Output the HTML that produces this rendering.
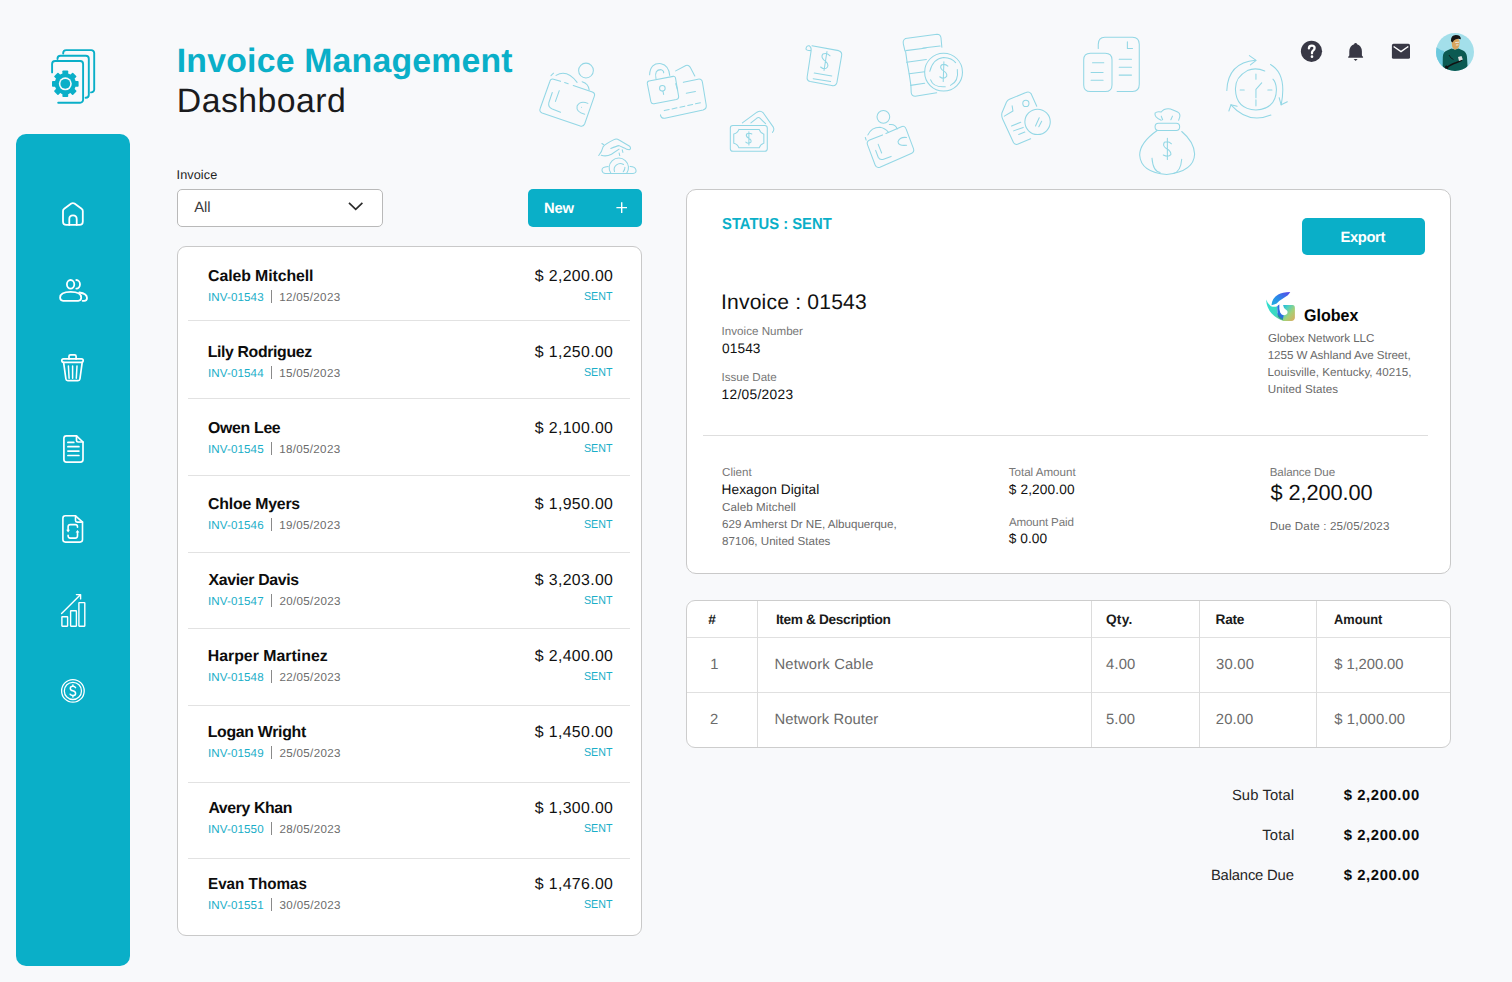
<!DOCTYPE html>
<html><head><meta charset="utf-8">
<style>
html,body{margin:0;padding:0;}
body{text-rendering:geometricPrecision;width:1512px;height:982px;position:relative;overflow:hidden;background:#f8f9fb;font-family:"Liberation Sans",sans-serif;}
.a{position:absolute;}
.t{position:absolute;white-space:nowrap;}
.sb{left:16px;top:134px;width:114px;height:832px;background:#0aafc8;border-radius:10px;}
.card{background:#fff;border:1px solid #c9c9c9;box-sizing:border-box;}
.hl{position:absolute;height:1px;background:#e0e0e0;}
.vl{position:absolute;width:1px;background:#dcdcdc;}
svg{position:absolute;overflow:visible;}
</style></head><body>
<!-- decorative background icons -->
<svg style="left:0;top:0" width="1512" height="200" viewBox="0 0 1512 200"><g fill="none" stroke="#93d7e5" stroke-width="1.05" stroke-linecap="round" stroke-linejoin="round"><path d="M 553.54,79.18 L 560.54,81.34 M 564.61,82.62 L 568.18,83.76 M 573.27,85.54 L 592.36,91.91 Q 595.54,93.18 594.27,96.36 L 584.72,123.72 Q 583.45,126.90 580.27,126.01 L 542.09,112.90 Q 538.91,111.63 540.18,108.45 L 549.73,81.72 Q 550.62,78.54 553.54,79.18" />
<path d="M 556.09,75.36 Q 566.91,69.00 577.09,82.36" />
<path d="M 551.00,75.62 L 553.54,73.20" />
<path d="M 582.18,81.72 Q 588.54,83.63 589.18,90.00" />
<path d="M 559.27,90.63 L 555.45,101.45 M 552.27,92.54 L 548.83,102.72 Q 547.82,107.18 552.27,109.09 L 560.54,112.27" />
<path d="M 587.90,103.36 Q 580.27,100.18 577.09,105.90 Q 575.81,112.27 584.72,114.18" />
<circle cx="581.54" cy="107.18" r="0.51" fill="#96d9e6" stroke="none"/>
<circle cx="585.99" cy="70.53" r="7.38" />
<path d="M 648.99,81.09 L 673.17,76.38 Q 675.08,76.00 675.46,77.91 L 678.64,96.36 Q 678.89,98.90 676.35,99.54 L 654.08,103.74 Q 651.53,104.25 650.90,101.70 L 647.33,83.63 Q 647.08,81.47 648.99,81.09" />
<path d="M 649.62,74.73 Q 650.26,62.64 661.08,63.65 Q 668.71,65.18 669.73,75.36" />
<path d="M 655.99,78.54 Q 654.08,69.63 661.08,69.63 Q 664.26,70.91 663.62,72.82" />
<circle cx="662.35" cy="88.34" r="2.80" />
<path d="M 662.99,91.27 L 663.62,94.45" />
<path d="M 683.35,82.36 L 697.98,79.18 Q 701.80,78.54 702.44,82.36 L 706.25,105.27 Q 706.64,109.09 703.07,109.98 L 664.89,118.25 Q 661.08,118.63 660.44,114.81" />
<path d="M 675.71,83.63 L 677.62,90.00" />
<path d="M 664.26,110.61 L 700.53,102.72" stroke-dasharray="5 3"/>
<path d="M 686.27,93.18 L 695.44,91.52" />
<path d="M 675.71,70.91 L 685.89,65.44 Q 688.44,64.54 690.09,67.09 L 694.80,76.00" />
<path d="M 598.72,155.53 Q 601.90,151.72 603.17,146.63 Q 605.08,144.08 613.99,139.63 Q 616.54,138.35 619.08,140.01 L 629.26,145.99 Q 631.81,148.54 629.26,149.81 Q 626.72,149.81 624.17,147.90 L 619.08,145.61 Q 616.54,145.99 610.81,148.54" />
<path d="M 601.26,155.28 Q 606.36,156.81 611.45,154.26 L 619.08,149.17" />
<path d="M 601.90,143.44 L 603.81,144.72" />
<path d="M 619.08,152.99 L 619.72,155.53 M 622.26,149.81 L 622.90,152.35" />
<path d="M611.0,173.5 A9.7,9.7 0 1 1 626.6,173.5"/>
<path d="M614.5,171.6 A6.1,6.1 0 0 1 623.5,164.5 M624.9,167.3 A6.1,6.1 0 0 1 623.2,171.8"/>
<path d="M608.1,166.4 Q601.5,166.8 602,170.5 Q602.5,173.5 605.5,173.5 L633,173.5 Q636.5,173.2 636,170 Q635.2,166.5 630.2,166.4"/>
<path d="M 812.00,45.82 L 838.66,50.64 Q 842.44,51.84 841.58,55.80 L 836.94,82.45 Q 836.08,86.41 831.78,85.55 L 810.28,81.59 Q 806.50,80.73 807.19,76.78 L 811.14,50.64 Q 811.49,47.20 809.42,45.82 Q 806.84,45.13 805.98,48.57 Q 805.64,50.64 811.14,50.64" />
<path d="M 830.06,55.80 Q 826.62,52.36 822.84,54.08 Q 820.60,56.66 824.04,60.09 Q 829.20,63.53 827.48,66.97 Q 824.90,70.41 820.60,66.97 M 826.96,51.50 L 824.04,70.41" />
<path d="M 814.24,72.99 L 831.78,75.92 M 813.21,78.67 L 830.58,81.59" />
<path d="M 732.90,125.44 L 764.71,125.44 Q 767.29,125.44 767.29,128.02 L 767.29,148.66 Q 767.29,151.24 764.71,151.24 L 732.90,151.24 Q 730.32,151.24 730.32,148.66 L 730.32,128.02 Q 730.32,125.44 732.90,125.44" />
<path d="M 738.92,129.40 L 759.21,129.40 Q 760.41,133.18 763.85,134.04 L 763.85,143.16 Q 760.41,144.02 759.21,147.80 L 738.92,147.80 Q 737.71,144.02 733.76,143.16 L 733.76,134.04 Q 737.71,133.18 738.92,129.40" />
<path d="M 751.81,134.04 Q 749.23,132.32 746.66,134.04 Q 745.45,136.28 748.37,138.00 Q 751.81,139.72 750.95,142.12 Q 748.37,144.36 745.80,142.12 M 748.89,131.81 L 748.89,144.88" />
<path d="M 742.36,122.86 L 756.97,112.20 Q 760.41,109.97 762.99,112.55 L 773.31,127.16 Q 774.69,130.09 772.45,132.32" />
<path d="M 750.95,122.86 L 756.97,118.05 Q 758.69,116.84 760.41,118.56 L 765.57,123.72" />
<path d="M 905.38,38.60 L 937.02,34.30 Q 940.46,34.30 940.98,37.74 L 941.84,47.20" />
<path d="M 905.38,38.60 Q 902.63,39.97 903.32,43.76 L 904.87,50.64 Q 905.73,52.36 905.73,52.36 L 907.10,62.16 L 909.17,73.85 L 910.89,85.37 L 911.23,92.77 Q 911.75,96.21 915.18,96.21 L 936.68,92.77" />
<path d="M 905.73,50.64 L 926.36,48.06 M 922.92,48.06 L 940.12,45.99 M 906.59,62.33 L 926.36,59.58 M 909.17,73.85 L 924.64,71.79 M 910.54,85.37 L 924.64,83.31" />
<circle cx="943.56" cy="72.13" r="18.92" />
<path d="M 957.32,69.55 Q 959.04,81.59 950.44,85.37 M 945.28,86.75 Q 933.24,87.61 930.66,79.87 M 929.80,71.27 Q 933.24,58.37 943.56,57.52 Q 952.16,57.86 955.60,62.67" />
<path d="M 947.86,66.11 Q 945.28,63.53 941.84,64.74 Q 939.26,66.97 942.18,69.90 Q 947.86,72.99 946.66,76.43 Q 943.56,79.87 939.78,76.78 M 943.90,61.81 L 943.22,81.59" />
<circle cx="883.37" cy="116.84" r="6.36" />
<path d="M 869.61,140.06 L 882.51,134.90 M 885.95,133.53 L 901.43,126.65 Q 904.87,125.44 906.07,128.88 L 913.47,148.66 Q 914.67,152.10 911.23,153.47 L 879.93,167.23 Q 876.49,168.44 875.12,165.00 L 867.55,144.88 Q 866.17,141.44 869.61,140.06" />
<path d="M 867.89,134.90 Q 871.33,127.16 879.93,127.16 Q 885.09,128.02 888.53,132.32" />
<path d="M 865.31,137.48 L 866.17,140.06" />
<path d="M 889.39,124.58 Q 895.41,123.72 897.13,128.88" />
<path d="M 878.21,144.36 L 881.65,152.96 M 875.63,150.38 L 878.21,157.26 Q 879.93,160.70 884.23,158.98 L 891.11,156.40" />
<path d="M 906.59,137.48 Q 899.71,136.62 897.99,141.78 Q 897.99,146.08 906.59,145.22" />
<path d="M 1036.75,106.28 L 1031.01,93.56 Q 1028.96,91.10 1025.88,92.54 L 1009.48,99.30 Q 1007.43,100.13 1006.40,102.18 L 1001.89,113.04 Q 1001.28,116.12 1002.71,119.19 L 1013.58,142.77 Q 1015.63,145.44 1018.71,143.80 L 1030.60,138.67" />
<path d="M 1012.14,105.87 L 1012.96,110.99 L 1004.35,116.12" />
<circle cx="1025.88" cy="103.41" r="3.08" />
<path d="M 1011.53,125.96 L 1020.76,122.27 M 1013.58,130.88 L 1023.22,127.40 M 1018.71,134.57 L 1024.86,132.11" />
<circle cx="1037.57" cy="121.86" r="12.71" />
<path d="M 1035.52,125.96 L 1039.21,117.76 M 1038.80,126.78 L 1041.67,121.24" />
<path d="M 1098.26,48.45 L 1098.26,44.35 Q 1098.26,37.18 1104.82,37.18 L 1132.51,37.18 Q 1139.27,37.18 1139.27,44.35 L 1139.27,84.34 Q 1139.27,91.51 1132.51,91.51 L 1117.13,91.51" />
<path d="M 1090.47,53.17 L 1105.23,53.17 Q 1112.00,53.17 1112.00,59.73 L 1112.00,84.95 Q 1112.00,91.51 1105.23,91.51 L 1090.47,91.51 Q 1083.71,91.51 1083.71,84.95 L 1083.71,59.73 Q 1083.71,53.17 1090.47,53.17" />
<path d="M 1127.38,41.89 L 1127.38,48.45 L 1132.51,48.45" />
<path d="M 1119.18,59.32 L 1131.48,59.32 M 1119.18,67.32 L 1131.48,67.32 M 1119.18,75.11 L 1131.48,75.11" />
<path d="M 1092.52,62.81 L 1103.80,62.81" />
<path d="M 1091.09,72.44 L 1104.82,72.44 M 1091.09,80.24 L 1104.82,80.24" stroke-dasharray="12 6"/>
<path d="M 1157.11,130.47 Q 1139.68,142.77 1139.68,155.08 Q 1140.71,172.51 1166.75,174.56 Q 1194.02,171.48 1194.63,154.05 Q 1194.02,141.75 1181.72,131.50" />
<path d="M 1158.55,123.30 L 1176.18,123.30 Q 1179.67,123.30 1179.67,126.78 Q 1179.67,130.47 1176.18,130.47 L 1158.55,130.47 Q 1155.06,130.47 1155.06,126.78 Q 1155.06,123.30 1158.55,123.30" />
<path d="M 1161.21,120.22 Q 1154.04,117.14 1155.06,113.04 Q 1157.11,110.99 1161.21,112.02 Q 1164.29,107.92 1170.44,108.94 Q 1175.56,110.99 1177.62,112.02 Q 1181.72,114.07 1178.64,120.22" />
<path d="M 1151.98,158.15 Q 1153.01,171.48 1160.19,172.51 M 1181.72,159.18 Q 1180.69,171.48 1173.51,173.53" />
<path d="M 1161.21,116.12 L 1162.65,119.81 M 1172.49,116.12 L 1170.85,119.81" />
<path d="M 1171.46,143.80 Q 1168.39,140.72 1164.29,142.36 Q 1162.24,145.85 1166.34,148.52 Q 1171.46,151.39 1170.85,154.67 Q 1168.39,157.54 1163.26,155.08 M 1167.36,138.26 L 1167.36,159.59" />
<path d="M 1226.83,90.49 Q 1227.85,62.81 1255.53,60.35" />
<path d="M 1249.38,55.63 L 1256.15,60.35 L 1250.41,64.86" />
<path d="M 1270.50,64.45 Q 1287.31,74.08 1281.16,104.84" />
<path d="M 1287.31,101.77 L 1281.16,104.84 L 1279.11,97.66" />
<path d="M 1270.91,115.09 Q 1248.36,124.32 1230.93,104.84" />
<path d="M 1228.88,110.99 L 1230.93,104.84 L 1237.08,106.28" />
<path d="M 1264.76,71.01 Q 1255.53,66.91 1247.33,70.60 Q 1235.03,77.16 1235.44,89.46 Q 1236.05,108.94 1255.94,109.97 Q 1276.04,108.94 1276.45,89.46 Q 1276.04,82.29 1272.96,79.21" />
<path d="M 1255.94,74.08 L 1255.94,79.21 M 1255.94,99.71 L 1255.94,105.87 M 1240.15,90.08 L 1244.25,90.08 M 1267.83,90.08 L 1271.94,90.08 M 1255.94,97.66 L 1255.94,89.46 L 1261.68,82.90" /></g></svg>
<!-- logo -->
<svg class="a" style="left:40px;top:40px" width="70" height="70" viewBox="0 0 70 70">
 <g fill="none" stroke="#0aafc8" stroke-width="1.9" stroke-linecap="round">
  <path d="M23.2,13.6 V13.1 a3,3 0 0 1 3,-3 H51.2 a3,3 0 0 1 3,3 V49.4 a3,3 0 0 1 -3,3 H51"/>
  <path d="M17.5,19 V18.7 a3,3 0 0 1 3,-3 H45.8 a3,3 0 0 1 3,3 V54.7 a3,3 0 0 1 -3,3 H45.6"/>
  <path d="M12.1,32.4 V24 a3,3 0 0 1 3,-3 H40.1 a3,3 0 0 1 3,3 V59.7 a3,3 0 0 1 -3,3 H18.2"/>
 </g>
 <g transform="translate(25.3,43.8)" fill="#0aafc8">
  <circle r="10.6"/>
  <rect x="-2.9" y="-13.3" width="5.8" height="26.6" rx="0.8"/>
  <rect x="-2.9" y="-13.3" width="5.8" height="26.6" rx="0.8" transform="rotate(45)"/>
  <rect x="-2.9" y="-13.3" width="5.8" height="26.6" rx="0.8" transform="rotate(90)"/>
  <rect x="-2.9" y="-13.3" width="5.8" height="26.6" rx="0.8" transform="rotate(135)"/>
  <circle r="6.5" fill="#f8f9fb"/>
  <circle r="4.9"/>
 </g>
</svg>
<!-- sidebar -->
<div class="a sb"></div>
<svg style="left:50px;top:190px" width="50" height="50" viewBox="0 0 50 50"><g fill="none" stroke="#fff" stroke-width="1.8" stroke-linejoin="round" stroke-linecap="round">
 <path d="M13,21 Q13,19.6 14.2,18.8 L21.3,13.6 Q22.9,12.5 24.5,13.6 L31.6,18.8 Q32.8,19.6 32.8,21 V31.5 Q32.8,34.9 29.4,34.9 H16.4 Q13,34.9 13,31.5 Z"/>
 <path d="M19.3,34.9 V28.9 Q19.3,25.3 23,25.3 Q26.7,25.3 26.7,28.9 V34.9"/></g></svg>
<svg style="left:50px;top:265px" width="50" height="50" viewBox="0 0 50 50"><g fill="none" stroke="#fff" stroke-width="1.8" stroke-linejoin="round" stroke-linecap="round">
 <ellipse cx="20.6" cy="19.3" rx="3.7" ry="4.3"/>
 <path d="M26.3,15 A3.7,4.3 0 0 1 26.3,23.6"/>
 <path d="M10.1,32.6 Q10.1,26.9 20.6,26.9 Q31.2,26.9 31.2,32.6 Q31.2,35.8 28.2,35.8 H13.1 Q10.1,35.8 10.1,32.6 Z"/>
 <path d="M29.3,27.5 Q37,28.5 37,33 Q37,35.8 34.2,35.8 H32.6"/></g></svg>
<svg style="left:50px;top:343px" width="50" height="50" viewBox="0 0 50 50"><g fill="none" stroke="#fff" stroke-width="1.7" stroke-linejoin="round" stroke-linecap="round">
 <rect x="11.8" y="15.9" width="21.4" height="3.4" rx="1.7"/>
 <path d="M19,15.9 V13.3 Q19,11.8 20.5,11.8 H24.6 Q26.1,11.8 26.1,13.3 V15.9"/>
 <path d="M13.6,19.3 L15.9,36 Q16.1,37.7 17.8,37.7 H28 Q29.7,37.7 29.9,36 L32.2,19.3"/>
 <path d="M18.4,22.9 L19.1,35.2 M22.6,22.9 V35.2 M27,22.9 L26.3,35.2" stroke-width="1.5"/></g></svg>
<svg style="left:50px;top:424px" width="50" height="50" viewBox="0 0 50 50"><g fill="none" stroke="#fff" stroke-width="1.7" stroke-linejoin="round" stroke-linecap="round">
 <path d="M26.5,11.8 H16.4 Q13.9,11.8 13.9,14.3 V35.6 Q13.9,38.1 16.4,38.1 H30.5 Q33,38.1 33,35.6 V18 Z"/>
 <path d="M26.5,11.8 V16.4 Q26.5,18 28.1,18 H33"/>
 <path d="M17.9,18.4 H23.8 M17.9,22.7 H28.9 M17.9,27.1 H28.9 M17.9,31.5 H28.9"/></g></svg>
<svg style="left:50px;top:504px" width="50" height="50" viewBox="0 0 50 50"><g fill="none" stroke="#fff" stroke-width="1.6" stroke-linejoin="round" stroke-linecap="round">
 <path d="M25.5,11.8 H15.4 Q12.9,11.8 12.9,14.3 V35.6 Q12.9,38.1 15.4,38.1 H30 Q32.5,38.1 32.5,35.6 V18.1 Z"/>
 <path d="M25.5,11.8 V16.5 Q25.5,18.1 27.1,18.1 H32.5"/>
 <path d="M27.5,23.3 V22.8 Q27.5,20.6 25.3,20.6 H20.3 Q18.1,20.6 18.1,22.8 V26"/>
 <path d="M18.1,31.2 V31.8 Q18.1,34.1 20.3,34.1 H25.3 Q27.5,34.1 27.5,31.8 V28.4"/></g>
 <path d="M16.2,25.8 L18.1,28.4 L20,25.8 Z M25.6,28.6 L27.5,26 L29.4,28.6 Z" fill="#fff"/></svg>
<svg style="left:50px;top:587px" width="50" height="50" viewBox="0 0 50 50"><g fill="none" stroke="#fff" stroke-width="1.4" stroke-linejoin="round" stroke-linecap="round">
 <rect x="11.9" y="29.7" width="5.7" height="9.5" rx="0.4"/>
 <rect x="20.6" y="23.8" width="5.8" height="15.4" rx="0.4"/>
 <rect x="28.9" y="15.6" width="5.9" height="23.6" rx="0.4"/>
 <path d="M11.6,26.6 L30.4,7.8 M26.4,7.6 H30.6 V11.9"/></g></svg>
<svg style="left:50px;top:666px" width="50" height="50" viewBox="0 0 50 50"><g fill="none" stroke="#fff" stroke-width="1.3">
 <circle cx="22.9" cy="24.9" r="11.3"/><circle cx="22.9" cy="24.9" r="8.6"/></g>
 <path d="M25.5,21.6 Q24.8,20.3 22.9,20.3 Q20.3,20.3 20.3,22.4 Q20.3,24.2 22.9,24.8 Q25.6,25.4 25.6,27.4 Q25.6,29.6 22.9,29.6 Q20.9,29.6 20.1,28.2 M22.9,19 V20.3 M22.9,29.6 V30.9" fill="none" stroke="#fff" stroke-width="1.5" stroke-linecap="round"/></svg>
<!-- header icons -->
<svg style="left:0;top:0" width="1512" height="100" viewBox="0 0 1512 100">
 <circle cx="1311.5" cy="51.3" r="10.6" fill="#383845"/>
 <path d="M1308.9,48.4 Q1308.9,45.6 1311.8,45.6 Q1314.6,45.6 1314.6,48.1 Q1314.6,49.7 1313.1,50.6 Q1312,51.3 1312,52.8 V53.3" fill="none" stroke="#fff" stroke-width="2.3" stroke-linecap="round"/>
 <circle cx="1312" cy="56.7" r="1.35" fill="#fff"/>
 <path d="M1355.6,42.9 Q1356.9,42.9 1357.1,44.2 Q1361.6,45.6 1361.9,51.2 V55.4 L1363.1,57.1 Q1363.3,57.8 1362.6,57.8 H1348.6 Q1347.9,57.8 1348.1,57.1 L1349.3,55.4 V51.2 Q1349.6,45.6 1354.1,44.2 Q1354.3,42.9 1355.6,42.9 Z" fill="#383845"/>
 <path d="M1353.6,59.1 H1357.6 L1355.6,61.1 Z" fill="#383845"/>
 <rect x="1391.9" y="43.8" width="18.1" height="15" rx="1.6" fill="#383845"/>
 <path d="M1393.6,46.5 L1401,51.6 L1408.3,46.5" fill="none" stroke="#fff" stroke-width="1.5"/>
</svg>
<!-- avatar -->
<svg style="left:1436px;top:33px" width="38" height="38" viewBox="0 0 38 38">
 <defs><clipPath id="avc"><circle cx="19" cy="19" r="19"/></clipPath></defs>
 <g clip-path="url(#avc)">
  <rect width="38" height="38" fill="#a3dfea"/>
  <path d="M0,14 Q4,17 8,18 L8,38 H0 Z" fill="#6cc9de"/>
  <path d="M6.6,38 L6.8,24 Q7,18.5 11.5,17.2 L15.5,15.6 Q19,17.2 22.5,15.6 L27,17.5 Q30.5,19 31,24 L31.8,38 Z" fill="#0b5a52"/>
  <path d="M15.6,8.5 Q15.5,5.5 19,5.2 Q23.3,5 23.5,8.5 L23.3,12.5 Q22.5,16 19.5,16.6 Q17,16.6 16.2,13.5 Z" fill="#d8a55e"/>
  <path d="M14.9,8.2 Q14.8,2.2 19.8,2.1 Q25,2.2 24.9,6.3 Q22.5,5.4 19.8,6.2 Q17.5,6.9 16.6,9.4 Q15.8,8.6 14.9,8.2 Z" fill="#161616"/>
  <path d="M19.2,9.6 L23,9.2 M19.8,12 L22.5,11.8" stroke="#eeeeee" stroke-width="0.9"/>
  <path d="M9,35.5 Q16,31 20,29.8 Q24,28.5 26,27.2" fill="none" stroke="#111" stroke-width="1.5"/>
  <path d="M9.5,33 L12,35.5" stroke="#111" stroke-width="2"/>
  <path d="M13,22 Q14.5,25.5 17.5,26.5" fill="none" stroke="#111" stroke-width="0.8"/>
  <path d="M22,24 L25.5,23 L26.8,26.5 L23,28 Z" fill="#dedede"/>
 </g>
</svg>
<!-- filter -->
<div class="a" style="left:177px;top:189px;width:206px;height:38px;background:#fff;border:1px solid #b9b9b9;box-sizing:border-box;border-radius:5px"></div>
<svg style="left:0;top:0" width="700" height="240" viewBox="0 0 700 240">
 <path d="M349,202.8 L355.7,209.3 L362.4,202.8" fill="none" stroke="#2b2b2b" stroke-width="1.7"/>
</svg>
<div class="a" style="left:528px;top:189px;width:114px;height:38px;background:#0aafc8;border-radius:5px"></div>
<svg style="left:0;top:0" width="700" height="240" viewBox="0 0 700 240">
 <path d="M616.4,207.6 H627 M621.7,202.3 V212.9" fill="none" stroke="#fff" stroke-width="1.4"/>
</svg>
<!-- list card -->
<div class="a card" style="left:177px;top:246px;width:465px;height:690px;border-radius:9px"></div>
<div class="hl" style="left:188px;top:320px;width:442px;background:#e2e2e2"></div>
<div class="hl" style="left:188px;top:398px;width:442px;background:#e2e2e2"></div>
<div class="hl" style="left:188px;top:475px;width:442px;background:#e2e2e2"></div>
<div class="hl" style="left:188px;top:552px;width:442px;background:#e2e2e2"></div>
<div class="hl" style="left:188px;top:628px;width:442px;background:#e2e2e2"></div>
<div class="hl" style="left:188px;top:705px;width:442px;background:#e2e2e2"></div>
<div class="hl" style="left:188px;top:782px;width:442px;background:#e2e2e2"></div>
<div class="hl" style="left:188px;top:858px;width:442px;background:#e2e2e2"></div>
<div class="a" style="left:271px;top:290.4px;width:1.4px;height:13px;background:#8a8a8a"></div>
<div class="a" style="left:271px;top:366.4px;width:1.4px;height:13px;background:#8a8a8a"></div>
<div class="a" style="left:271px;top:442.4px;width:1.4px;height:13px;background:#8a8a8a"></div>
<div class="a" style="left:271px;top:518.3px;width:1.4px;height:13px;background:#8a8a8a"></div>
<div class="a" style="left:271px;top:594.3px;width:1.4px;height:13px;background:#8a8a8a"></div>
<div class="a" style="left:271px;top:670.3px;width:1.4px;height:13px;background:#8a8a8a"></div>
<div class="a" style="left:271px;top:746.3px;width:1.4px;height:13px;background:#8a8a8a"></div>
<div class="a" style="left:271px;top:822.3px;width:1.4px;height:13px;background:#8a8a8a"></div>
<div class="a" style="left:271px;top:898.2px;width:1.4px;height:13px;background:#8a8a8a"></div>
<!-- detail card -->
<div class="a card" style="left:686px;top:189px;width:765px;height:385px;border-radius:10px"></div>
<div class="a" style="left:1302px;top:218px;width:123px;height:37px;background:#0aafc8;border-radius:5px"></div>
<div class="hl" style="left:703px;top:435px;width:725px;background:#dedede"></div>
<svg style="left:1262px;top:288px" width="38" height="38" viewBox="0 0 982 982">
 <defs>
  <linearGradient id="gtop" x1="0" y1="1" x2="1" y2="0"><stop offset="0" stop-color="#1fb0e0"/><stop offset="0.45" stop-color="#2a8ae8"/><stop offset="1" stop-color="#5b45e8"/></linearGradient>
  <linearGradient id="gleft" x1="0" y1="0" x2="1" y2="1"><stop offset="0" stop-color="#2ee0d2"/><stop offset="0.6" stop-color="#3cd8c0"/><stop offset="1" stop-color="#9ad080"/></linearGradient>
  <linearGradient id="gright" x1="0" y1="0" x2="1" y2="1"><stop offset="0" stop-color="#16b0e0"/><stop offset="0.3" stop-color="#4fd2c0"/><stop offset="0.6" stop-color="#a5d078"/><stop offset="1" stop-color="#dfaa5e"/></linearGradient>
 </defs>
 <path d="M105,300 Q120,520 250,660 Q380,800 560,850 L600,850 Q450,760 400,640 L390,470 Q330,500 230,470 Q150,420 105,300 Z" fill="url(#gleft)"/>
 <path d="M245,445 Q260,260 420,170 Q520,110 730,105 Q690,190 560,260 Q440,330 380,400 Q310,430 245,445 Z" fill="url(#gtop)"/>
 <path d="M545,440 L790,440 Q850,445 850,520 L850,770 Q845,850 760,850 L560,850 Q480,830 520,700 Q560,705 600,700 Q665,680 662,620 Q660,585 620,565 Q555,530 545,440 Z" fill="url(#gright)"/>
 <path d="M392,475 Q415,435 448,425 Q440,560 470,630 Q500,690 560,705 L540,800 Q440,780 405,700 Z" fill="#2a6ee0"/>
 <path d="M415,680 Q450,760 545,790 L540,830 Q450,815 405,730 Z" fill="#2a8e9a"/>
</svg>

<!-- table -->
<div class="a card" style="left:686px;top:600px;width:765px;height:148px;border-radius:9px;border-color:#cdcdcd"></div>
<div class="hl" style="left:687px;top:637px;width:763px"></div>
<div class="hl" style="left:687px;top:692px;width:763px"></div>
<div class="vl" style="left:757px;top:601px;height:146px"></div>
<div class="vl" style="left:1091px;top:601px;height:146px"></div>
<div class="vl" style="left:1199px;top:601px;height:146px"></div>
<div class="vl" style="left:1316px;top:601px;height:146px"></div>
<!-- texts -->
<div class="t" style="left:176.79px;top:41.00px;font-size:33.8px;line-height:41px;color:#0aafc8;font-weight:bold;letter-spacing:0.201px;">Invoice Management</div>
<div class="t" style="left:176.86px;top:81.00px;font-size:33.8px;line-height:41px;color:#1b1b1d;letter-spacing:0.461px;">Dashboard</div>
<div class="t" style="left:176.60px;top:167.00px;font-size:12.7px;line-height:16px;color:#1f1f1f;letter-spacing:0.071px;">Invoice</div>
<div class="t" style="left:194.20px;top:199.00px;font-size:14.8px;line-height:18px;color:#3a3a3a;letter-spacing:-0.030px;">All</div>
<div class="t" style="left:544.00px;top:199.80px;font-size:14.8px;line-height:18px;color:#ffffff;font-weight:bold;letter-spacing:-0.260px;">New</div>
<div class="t" style="left:208.10px;top:267.00px;font-size:15.85px;line-height:20px;color:#0d0d0d;font-weight:bold;letter-spacing:-0.090px;">Caleb Mitchell</div>
<div class="t" style="left:207.90px;top:291.00px;font-size:11.6px;line-height:14px;color:#1aaec8;letter-spacing:0.117px;">INV-01543</div>
<div class="t" style="left:279.20px;top:291.00px;font-size:11.6px;line-height:14px;color:#6b6b6b;letter-spacing:0.322px;">12/05/2023</div>
<div class="t" style="left:534.80px;top:267.20px;font-size:15.85px;line-height:20px;color:#111111;letter-spacing:0.355px;">$ 2,200.00</div>
<div class="t" style="left:584.04px;top:290.00px;font-size:11.6px;line-height:14px;color:#1aaec8;transform:scaleX(0.9190);transform-origin:0 0;">SENT</div>
<div class="t" style="left:207.70px;top:342.98px;font-size:15.85px;line-height:20px;color:#0d0d0d;font-weight:bold;letter-spacing:-0.367px;">Lily Rodriguez</div>
<div class="t" style="left:207.90px;top:366.98px;font-size:11.6px;line-height:14px;color:#1aaec8;letter-spacing:0.117px;">INV-01544</div>
<div class="t" style="left:279.20px;top:366.98px;font-size:11.6px;line-height:14px;color:#6b6b6b;letter-spacing:0.322px;">15/05/2023</div>
<div class="t" style="left:534.80px;top:343.18px;font-size:15.85px;line-height:20px;color:#111111;letter-spacing:0.355px;">$ 1,250.00</div>
<div class="t" style="left:584.04px;top:365.98px;font-size:11.6px;line-height:14px;color:#1aaec8;transform:scaleX(0.9190);transform-origin:0 0;">SENT</div>
<div class="t" style="left:208.10px;top:418.96px;font-size:15.85px;line-height:20px;color:#0d0d0d;font-weight:bold;letter-spacing:-0.322px;">Owen Lee</div>
<div class="t" style="left:207.90px;top:442.96px;font-size:11.6px;line-height:14px;color:#1aaec8;letter-spacing:0.117px;">INV-01545</div>
<div class="t" style="left:279.20px;top:442.96px;font-size:11.6px;line-height:14px;color:#6b6b6b;letter-spacing:0.322px;">18/05/2023</div>
<div class="t" style="left:534.80px;top:419.16px;font-size:15.85px;line-height:20px;color:#111111;letter-spacing:0.355px;">$ 2,100.00</div>
<div class="t" style="left:584.04px;top:441.96px;font-size:11.6px;line-height:14px;color:#1aaec8;transform:scaleX(0.9190);transform-origin:0 0;">SENT</div>
<div class="t" style="left:208.10px;top:494.94px;font-size:15.85px;line-height:20px;color:#0d0d0d;font-weight:bold;letter-spacing:-0.213px;">Chloe Myers</div>
<div class="t" style="left:207.90px;top:518.94px;font-size:11.6px;line-height:14px;color:#1aaec8;letter-spacing:0.117px;">INV-01546</div>
<div class="t" style="left:279.20px;top:518.94px;font-size:11.6px;line-height:14px;color:#6b6b6b;letter-spacing:0.322px;">19/05/2023</div>
<div class="t" style="left:534.80px;top:495.14px;font-size:15.85px;line-height:20px;color:#111111;letter-spacing:0.355px;">$ 1,950.00</div>
<div class="t" style="left:584.04px;top:517.94px;font-size:11.6px;line-height:14px;color:#1aaec8;transform:scaleX(0.9190);transform-origin:0 0;">SENT</div>
<div class="t" style="left:208.60px;top:570.92px;font-size:15.85px;line-height:20px;color:#0d0d0d;font-weight:bold;letter-spacing:-0.334px;">Xavier Davis</div>
<div class="t" style="left:207.90px;top:594.92px;font-size:11.6px;line-height:14px;color:#1aaec8;letter-spacing:0.117px;">INV-01547</div>
<div class="t" style="left:279.50px;top:594.92px;font-size:11.6px;line-height:14px;color:#6b6b6b;letter-spacing:0.322px;">20/05/2023</div>
<div class="t" style="left:534.80px;top:571.12px;font-size:15.85px;line-height:20px;color:#111111;letter-spacing:0.355px;">$ 3,203.00</div>
<div class="t" style="left:584.04px;top:593.92px;font-size:11.6px;line-height:14px;color:#1aaec8;transform:scaleX(0.9190);transform-origin:0 0;">SENT</div>
<div class="t" style="left:207.70px;top:646.90px;font-size:15.85px;line-height:20px;color:#0d0d0d;font-weight:bold;letter-spacing:0.017px;">Harper Martinez</div>
<div class="t" style="left:207.90px;top:670.90px;font-size:11.6px;line-height:14px;color:#1aaec8;letter-spacing:0.117px;">INV-01548</div>
<div class="t" style="left:279.50px;top:670.90px;font-size:11.6px;line-height:14px;color:#6b6b6b;letter-spacing:0.322px;">22/05/2023</div>
<div class="t" style="left:534.80px;top:647.10px;font-size:15.85px;line-height:20px;color:#111111;letter-spacing:0.355px;">$ 2,400.00</div>
<div class="t" style="left:584.04px;top:669.90px;font-size:11.6px;line-height:14px;color:#1aaec8;transform:scaleX(0.9190);transform-origin:0 0;">SENT</div>
<div class="t" style="left:207.70px;top:722.88px;font-size:15.85px;line-height:20px;color:#0d0d0d;font-weight:bold;letter-spacing:-0.296px;">Logan Wright</div>
<div class="t" style="left:207.90px;top:746.88px;font-size:11.6px;line-height:14px;color:#1aaec8;letter-spacing:0.117px;">INV-01549</div>
<div class="t" style="left:279.50px;top:746.88px;font-size:11.6px;line-height:14px;color:#6b6b6b;letter-spacing:0.322px;">25/05/2023</div>
<div class="t" style="left:534.80px;top:723.08px;font-size:15.85px;line-height:20px;color:#111111;letter-spacing:0.355px;">$ 1,450.00</div>
<div class="t" style="left:584.04px;top:745.88px;font-size:11.6px;line-height:14px;color:#1aaec8;transform:scaleX(0.9190);transform-origin:0 0;">SENT</div>
<div class="t" style="left:208.40px;top:798.86px;font-size:15.85px;line-height:20px;color:#0d0d0d;font-weight:bold;letter-spacing:-0.380px;">Avery Khan</div>
<div class="t" style="left:207.90px;top:822.86px;font-size:11.6px;line-height:14px;color:#1aaec8;letter-spacing:0.117px;">INV-01550</div>
<div class="t" style="left:279.50px;top:822.86px;font-size:11.6px;line-height:14px;color:#6b6b6b;letter-spacing:0.322px;">28/05/2023</div>
<div class="t" style="left:534.80px;top:799.06px;font-size:15.85px;line-height:20px;color:#111111;letter-spacing:0.355px;">$ 1,300.00</div>
<div class="t" style="left:584.04px;top:821.86px;font-size:11.6px;line-height:14px;color:#1aaec8;transform:scaleX(0.9190);transform-origin:0 0;">SENT</div>
<div class="t" style="left:207.74px;top:874.84px;font-size:15.85px;line-height:20px;color:#0d0d0d;font-weight:bold;transform:scaleX(0.9602);transform-origin:0 0;">Evan Thomas</div>
<div class="t" style="left:207.90px;top:898.84px;font-size:11.6px;line-height:14px;color:#1aaec8;letter-spacing:0.117px;">INV-01551</div>
<div class="t" style="left:279.60px;top:898.84px;font-size:11.6px;line-height:14px;color:#6b6b6b;letter-spacing:0.322px;">30/05/2023</div>
<div class="t" style="left:534.80px;top:875.04px;font-size:15.85px;line-height:20px;color:#111111;letter-spacing:0.355px;">$ 1,476.00</div>
<div class="t" style="left:584.04px;top:897.84px;font-size:11.6px;line-height:14px;color:#1aaec8;transform:scaleX(0.9190);transform-origin:0 0;">SENT</div>
<div class="t" style="left:722.13px;top:215.20px;font-size:15.85px;line-height:20px;color:#0aafc8;font-weight:bold;transform:scaleX(0.9348);transform-origin:0 0;">STATUS : SENT</div>
<div class="t" style="left:1340.50px;top:229.20px;font-size:14.8px;line-height:18px;color:#ffffff;font-weight:bold;letter-spacing:-0.389px;">Export</div>
<div class="t" style="left:720.90px;top:290.00px;font-size:21.1px;line-height:26px;color:#111111;letter-spacing:0.201px;">Invoice : 01543</div>
<div class="t" style="left:721.60px;top:325.20px;font-size:11.6px;line-height:14px;color:#777777;letter-spacing:0.010px;">Invoice Number</div>
<div class="t" style="left:722.10px;top:340.00px;font-size:13.7px;line-height:17px;color:#111111;letter-spacing:0.081px;">01543</div>
<div class="t" style="left:721.60px;top:371.10px;font-size:11.6px;line-height:14px;color:#777777;letter-spacing:-0.033px;">Issue Date</div>
<div class="t" style="left:721.60px;top:386.10px;font-size:13.7px;line-height:17px;color:#111111;letter-spacing:0.328px;">12/05/2023</div>
<div class="t" style="left:1304.13px;top:305.00px;font-size:16.9px;line-height:21px;color:#050505;font-weight:bold;transform:scaleX(0.9490);transform-origin:0 0;">Globex</div>
<div class="t" style="left:1268.00px;top:332.10px;font-size:11.6px;line-height:14px;color:#6a6a6a;letter-spacing:-0.038px;">Globex Network LLC</div>
<div class="t" style="left:1267.70px;top:348.90px;font-size:11.6px;line-height:14px;color:#6a6a6a;letter-spacing:-0.048px;">1255 W Ashland Ave Street,</div>
<div class="t" style="left:1267.60px;top:365.70px;font-size:11.6px;line-height:14px;color:#6a6a6a;letter-spacing:0.040px;">Louisville, Kentucky, 40215,</div>
<div class="t" style="left:1267.70px;top:382.60px;font-size:11.6px;line-height:14px;color:#6a6a6a;letter-spacing:0.072px;">United States</div>
<div class="t" style="left:722.10px;top:465.90px;font-size:11.6px;line-height:14px;color:#777777;letter-spacing:-0.007px;">Client</div>
<div class="t" style="left:721.50px;top:481.00px;font-size:13.7px;line-height:17px;color:#111111;letter-spacing:0.081px;">Hexagon Digital</div>
<div class="t" style="left:722.10px;top:500.60px;font-size:11.6px;line-height:14px;color:#6a6a6a;letter-spacing:0.079px;">Caleb Mitchell</div>
<div class="t" style="left:722.10px;top:517.80px;font-size:11.6px;line-height:14px;color:#6a6a6a;">629 Amherst Dr NE, Albuquerque,</div>
<div class="t" style="left:722.10px;top:534.70px;font-size:11.6px;line-height:14px;color:#6a6a6a;">87106, United States</div>
<div class="t" style="left:1008.70px;top:465.90px;font-size:11.6px;line-height:14px;color:#777777;letter-spacing:-0.007px;">Total Amount</div>
<div class="t" style="left:1008.80px;top:481.00px;font-size:13.7px;line-height:17px;color:#111111;letter-spacing:0.118px;">$ 2,200.00</div>
<div class="t" style="left:1008.90px;top:516.20px;font-size:11.6px;line-height:14px;color:#777777;letter-spacing:-0.137px;">Amount Paid</div>
<div class="t" style="left:1008.80px;top:530.40px;font-size:13.7px;line-height:17px;color:#111111;letter-spacing:0.046px;">$ 0.00</div>
<div class="t" style="left:1269.70px;top:465.90px;font-size:11.6px;line-height:14px;color:#777777;letter-spacing:-0.097px;">Balance Due</div>
<div class="t" style="left:1270.40px;top:479.00px;font-size:21.8px;line-height:27px;color:#111111;letter-spacing:-0.091px;">$ 2,200.00</div>
<div class="t" style="left:1269.70px;top:520.10px;font-size:11.6px;line-height:14px;color:#6a6a6a;letter-spacing:0.151px;">Due Date : 25/05/2023</div>
<div class="t" style="left:708.20px;top:611.00px;font-size:13.7px;line-height:17px;color:#1a1a1a;font-weight:bold;">#</div>
<div class="t" style="left:775.90px;top:611.00px;font-size:13.7px;line-height:17px;color:#1a1a1a;font-weight:bold;letter-spacing:-0.351px;">Item &amp; Description</div>
<div class="t" style="left:1105.90px;top:611.00px;font-size:13.7px;line-height:17px;color:#1a1a1a;font-weight:bold;letter-spacing:0.293px;">Qty.</div>
<div class="t" style="left:1215.60px;top:611.00px;font-size:13.7px;line-height:17px;color:#1a1a1a;font-weight:bold;letter-spacing:-0.325px;">Rate</div>
<div class="t" style="left:1334.02px;top:611.00px;font-size:13.7px;line-height:17px;color:#1a1a1a;font-weight:bold;transform:scaleX(0.9360);transform-origin:0 0;">Amount</div>
<div class="t" style="left:710.20px;top:656.10px;font-size:14.8px;line-height:18px;color:#6b6b6b;letter-spacing:0.105px;">1</div>
<div class="t" style="left:774.50px;top:656.10px;font-size:14.8px;line-height:18px;color:#6b6b6b;letter-spacing:0.156px;">Network Cable</div>
<div class="t" style="left:1106.10px;top:656.10px;font-size:14.8px;line-height:18px;color:#6b6b6b;letter-spacing:0.142px;">4.00</div>
<div class="t" style="left:1216.00px;top:656.10px;font-size:14.8px;line-height:18px;color:#6b6b6b;letter-spacing:0.224px;">30.00</div>
<div class="t" style="left:1334.20px;top:656.10px;font-size:14.8px;line-height:18px;color:#6b6b6b;letter-spacing:-0.069px;">$ 1,200.00</div>
<div class="t" style="left:709.90px;top:711.10px;font-size:14.8px;line-height:18px;color:#6b6b6b;letter-spacing:0.105px;">2</div>
<div class="t" style="left:774.50px;top:711.10px;font-size:14.8px;line-height:18px;color:#6b6b6b;letter-spacing:0.070px;">Network Router</div>
<div class="t" style="left:1105.90px;top:711.10px;font-size:14.8px;line-height:18px;color:#6b6b6b;letter-spacing:0.105px;">5.00</div>
<div class="t" style="left:1215.80px;top:711.10px;font-size:14.8px;line-height:18px;color:#6b6b6b;letter-spacing:0.105px;">20.00</div>
<div class="t" style="left:1334.20px;top:711.10px;font-size:14.8px;line-height:18px;color:#6b6b6b;letter-spacing:0.105px;">$ 1,000.00</div>
<div class="t" style="left:1231.90px;top:787.20px;font-size:14.8px;line-height:18px;color:#262626;letter-spacing:0.085px;">Sub Total</div>
<div class="t" style="left:1343.70px;top:787.20px;font-size:14.8px;line-height:18px;color:#0a0a0a;font-weight:bold;letter-spacing:0.609px;">$ 2,200.00</div>
<div class="t" style="left:1262.20px;top:827.10px;font-size:14.8px;line-height:18px;color:#262626;letter-spacing:0.206px;">Total</div>
<div class="t" style="left:1343.70px;top:827.10px;font-size:14.8px;line-height:18px;color:#0a0a0a;font-weight:bold;letter-spacing:0.609px;">$ 2,200.00</div>
<div class="t" style="left:1210.90px;top:866.90px;font-size:14.8px;line-height:18px;color:#262626;letter-spacing:-0.171px;">Balance Due</div>
<div class="t" style="left:1343.70px;top:866.90px;font-size:14.8px;line-height:18px;color:#0a0a0a;font-weight:bold;letter-spacing:0.609px;">$ 2,200.00</div>
</body></html>
